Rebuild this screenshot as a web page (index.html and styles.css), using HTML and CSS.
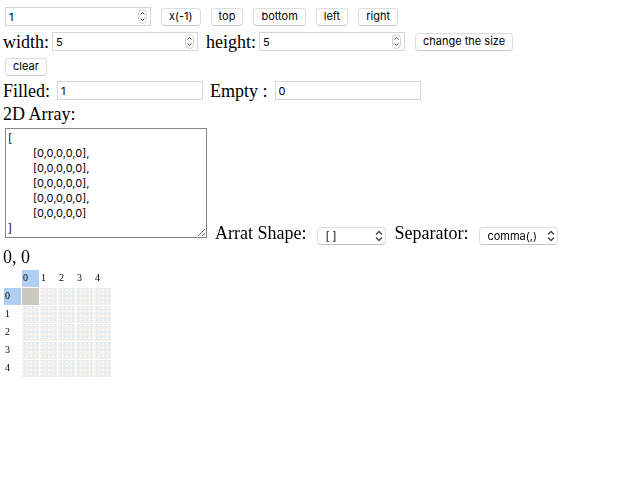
FILE: index.html
```html
<!DOCTYPE html>
<html lang="en">
<head>
<meta charset="utf-8">
<title>2D Array Editor</title>
<link rel="stylesheet" href="styles.css">
</head>
<body>
<svg class="symbols"><defs>
<symbol id="stepper" viewBox="0 0 9 15"><rect x=".5" y=".5" width="8" height="14" rx="4" fill="#fff" stroke="#d0d0d0"/><path d="M2.5 5.5l2-2 2 2M2.5 9.5l2 2 2-2" fill="none" stroke="#444"/></symbol>
<symbol id="chevrons" viewBox="0 0 8 12"><path d="M1 4.5l3-3 3 3M1 7.5l3 3 3-3" fill="none" stroke="#444" stroke-width="1.3"/></symbol>
</defs></svg>
<main>
<div class="row indent buttons">
<span class="number"><input type="number" value="1" aria-label="Amount"><svg><use href="#stepper"/></svg></span>
<button type="button">x(-1)</button>
<button type="button">top</button>
<button type="button">bottom</button>
<button type="button">left</button>
<button type="button">right</button>
</div>
<div class="row sizes">
<label for="width">width:</label>
<span class="number"><input id="width" type="number" value="5"><svg><use href="#stepper"/></svg></span>
<label for="height">height:</label>
<span class="number"><input id="height" type="number" value="5"><svg><use href="#stepper"/></svg></span>
<button type="button">change the size</button>
</div>
<div class="row indent"><button type="button">clear</button></div>
<div class="row short fields">
<label for="filled">Filled:</label><input id="filled" type="text" value="1">
<label for="empty">Empty :</label><input id="empty" type="text" value="0">
</div>
<div class="row short"><label for="array">2D Array:</label></div>
<div class="output">
<textarea id="array" spellcheck="false">[
	[0,0,0,0,0],
	[0,0,0,0,0],
	[0,0,0,0,0],
	[0,0,0,0,0],
	[0,0,0,0,0]
]</textarea>
<label for="shape">Arrat Shape:</label>
<span class="choice"><select id="shape" class="shape"><option>[ ]</option><option>{ }</option></select><svg><use href="#chevrons"/></svg></span>
<label for="separator">Separator:</label>
<span class="choice"><select id="separator" class="separator"><option>comma(,)</option><option>space</option></select><svg><use href="#chevrons"/></svg></span>
</div>
<div class="position">0, 0</div>
<table>
<tr><td></td><th class="active">0</th><th>1</th><th>2</th><th>3</th><th>4</th></tr>
<tr><th class="active">0</th><td class="current"></td><td class="cell"></td><td class="cell"></td><td class="cell"></td><td class="cell"></td></tr>
<tr><th>1</th><td class="cell"></td><td class="cell"></td><td class="cell"></td><td class="cell"></td><td class="cell"></td></tr>
<tr><th>2</th><td class="cell"></td><td class="cell"></td><td class="cell"></td><td class="cell"></td><td class="cell"></td></tr>
<tr><th>3</th><td class="cell"></td><td class="cell"></td><td class="cell"></td><td class="cell"></td><td class="cell"></td></tr>
<tr><th>4</th><td class="cell"></td><td class="cell"></td><td class="cell"></td><td class="cell"></td><td class="cell"></td></tr>
</table>
</main>
</body>
</html>
```
FILE: styles.css
```css
* { box-sizing: border-box; }
body {
  margin: 0;
  padding: 4px 3px;
  background: #fff;
  color: #000;
  font: 18px/22px "Liberation Serif", serif;
}
.symbols { display: none; }
input, button, select, textarea {
  margin: 0;
  font: 11px/15px Inter, sans-serif;
  color: #000;
  border-radius: 0;
}
.row {
  display: flex;
  align-items: center;
  min-height: 25px;
}
.row.short { min-height: 23px; }
.indent { padding-left: 2px; }
.buttons { gap: 10px; }
.sizes label { margin-right: 3px; }
.sizes .number { margin-right: 8px; }
.sizes button { margin-left: 2px; }
.fields { gap: 7px; }
input {
  width: 146px;
  height: 19px;
  padding: 1px 3px;
  border: 1px solid #d6d6d6;
  background: #fff;
}
input[type="number"] { appearance: textfield; }
input[type="number"]::-webkit-inner-spin-button { display: none; }
.number, .choice {
  position: relative;
  display: flex;
}
.number svg {
  position: absolute;
  right: 4px;
  top: 2px;
  width: 9px;
  height: 15px;
  pointer-events: none;
}
button {
  height: 18px;
  padding: 0 7px;
  border: 1px solid #ddd;
  border-bottom-color: #c8c8c8;
  border-radius: 4px;
  background: #fff;
}
.output {
  display: flex;
  align-items: flex-end;
  gap: 8px;
  padding: 3px 0 0 2px;
}
.output label {
  margin-bottom: -7px;
  padding: 0 3px 1px 0;
}
.output .choice { margin-bottom: -7px; }
textarea {
  width: 202px;
  height: 110px;
  padding: 2px;
  border: 1px solid #888;
  background: #fff;
  tab-size: 25px;
}
select {
  appearance: none;
  height: 18px;
  padding: 0 7px;
  border: 1px solid #ddd;
  border-bottom-color: #c4c4c4;
  border-radius: 4px;
  background: #fff;
}
.shape { width: 69px; }
.separator { width: 79px; }
.choice svg {
  position: absolute;
  right: 3px;
  top: 3px;
  width: 8px;
  height: 12px;
  pointer-events: none;
}
.position { margin-top: 7px; line-height: 24px; }
table { border-spacing: 1px; }
td, th {
  width: 17px;
  height: 17px;
  padding: 0 1px;
  font-size: 10px;
  font-weight: normal;
  line-height: 15px;
  text-align: left;
  vertical-align: top;
}
.active { background: #b0cef2; }
.current { background: #c9c9bd; }
.cell {
  background:
    conic-gradient(#e4edf2 25%, transparent 0) 0 0 / 4px 6px,
    conic-gradient(#f7eee6 25%, transparent 0) 1px 2px / 6px 4px,
    conic-gradient(#fafafa 25%, transparent 0) 2px 1px / 4px 4px,
    #eeeeed;
}
```
